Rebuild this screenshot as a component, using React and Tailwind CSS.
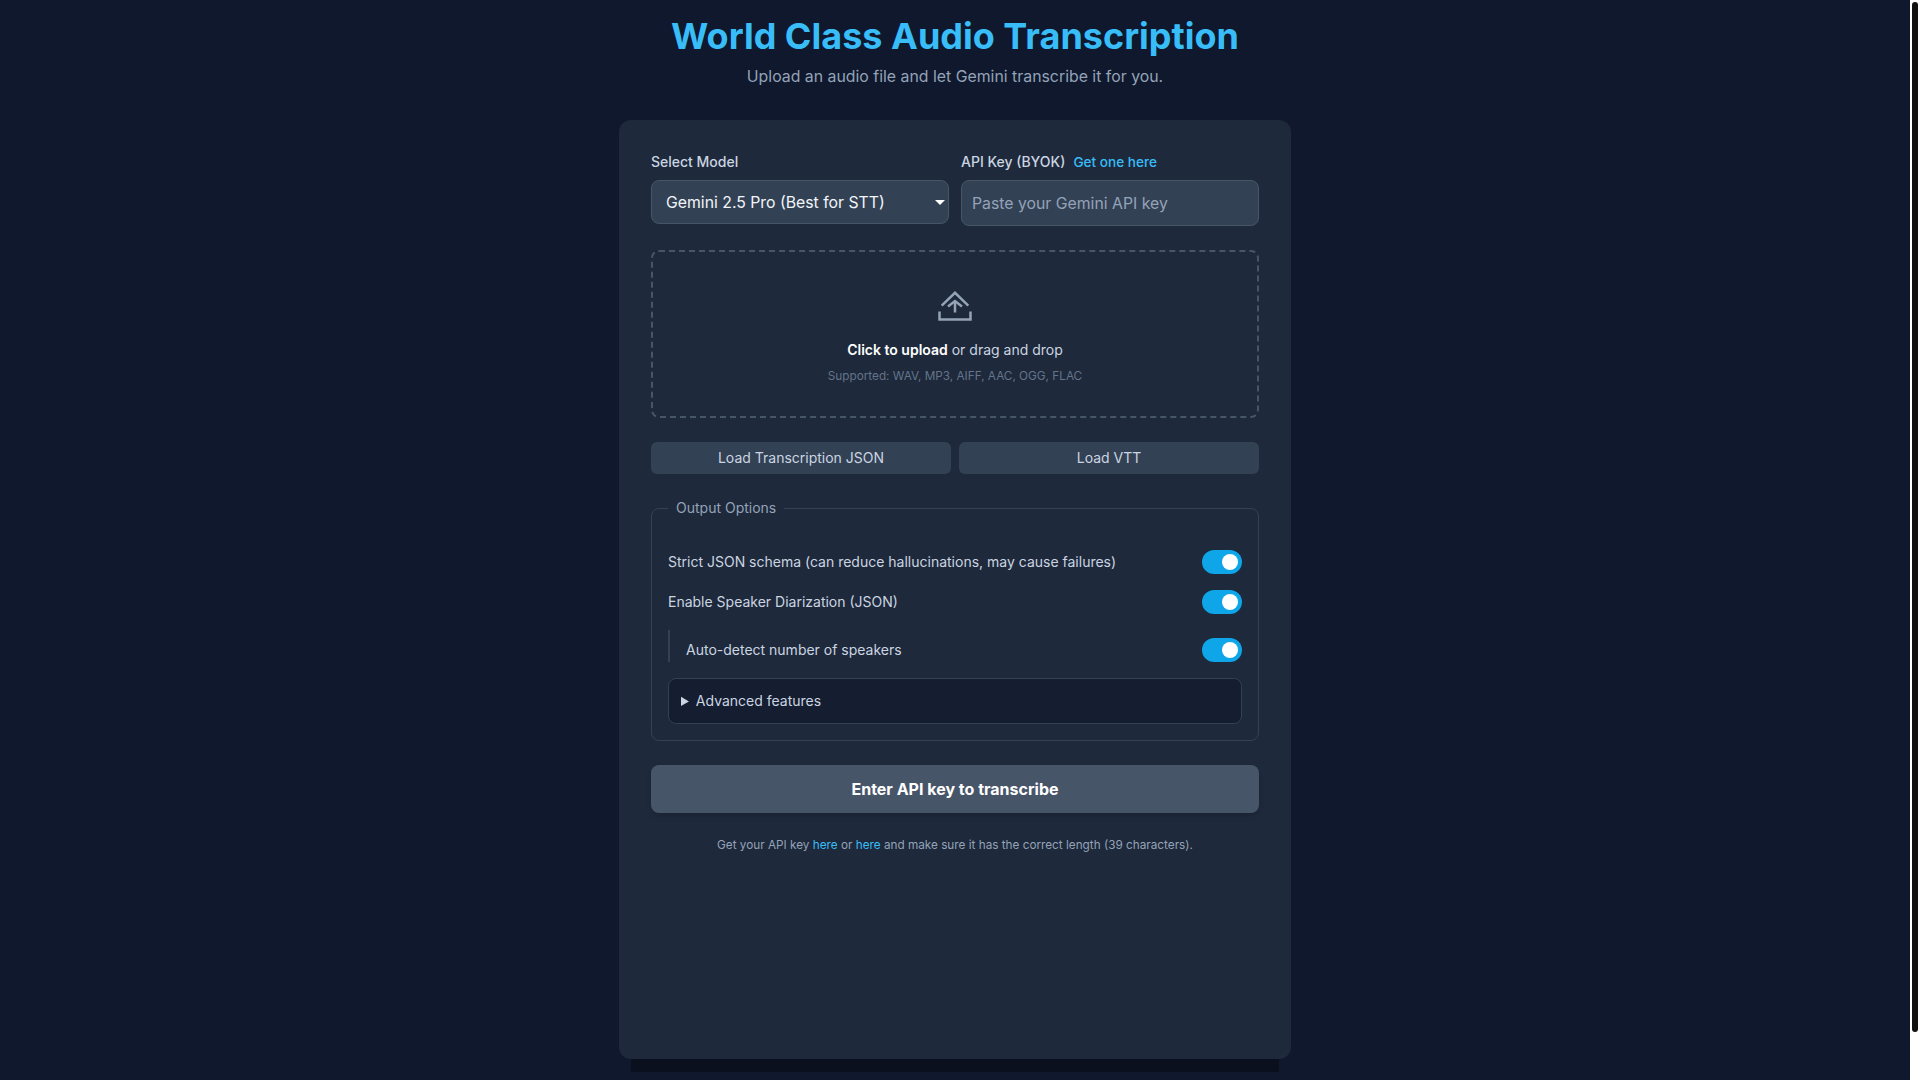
import React from "react";

const font = "font-['Inter',sans-serif]";

const Toggle = () => (
  <div className="relative w-10 h-6 shrink-0 rounded-full bg-[#0ea5e9]">
    <span className="absolute top-1 right-1 w-4 h-4 rounded-full bg-white" />
  </div>
);

const UploadIcon = () => (
  <svg
    viewBox="0 0 40 34"
    className="w-10 h-[34px] text-[#94a3b8]"
    fill="none"
    stroke="currentColor"
    strokeWidth="2.5"
  >
    <path d="M6.700 14.700 20 1.800l13.300 12.900" />
    <path d="M13 15.500 20 10l7 5.500" />
    <path d="M20 10v11.500" />
    <path d="M4.500 20.500v8h31v-8" />
  </svg>
);

export default function App() {
  return (
    <div className={`${font} flex h-screen overflow-hidden bg-[#0f182c] text-[#cbd5e1]`}>
      <main className="flex-1 pt-4 flex flex-col items-center">
        <h1 className="text-4xl font-bold text-[#38bdf8]">World Class Audio Transcription</h1>
        <p className="mt-[9px] text-[15.85px] leading-6 text-[#94a3b8]">Upload an audio file and let Gemini transcribe it for you.</p>

        <div className="mt-[31px] w-[672px] h-[939px] shrink-0 p-8 rounded-xl bg-[#1e293b] shadow-[0_25px_0_-12px_#0a101d]">
          <div className="grid grid-cols-2 gap-3">
            <div>
              <label className="block mb-2 text-sm font-medium">Select Model</label>
              <div className="relative">
                <select className="appearance-none w-full h-11 pl-3.5 pt-[2px] text-[15.8px] text-[#f1f5f9] bg-[#334155] border border-[#475569] rounded-lg">
                  <option>Gemini 2.5 Pro (Best for STT)</option>
                </select>
                <span className="absolute right-1 top-[20px] border-x-[5px] border-t-[5px] border-x-transparent border-t-white" />
              </div>
            </div>
            <div>
              <div className="flex items-baseline gap-2 mb-2 text-sm font-medium">
                <label>API Key (BYOK)</label>
                <a className="text-[13.6px] text-[#38bdf8]">Get one here</a>
              </div>
              <input
                className="w-full px-2.5 pt-[11px] pb-[9px] text-[15.8px] leading-6 text-[#f1f5f9] bg-[#334155] border border-[#475569] rounded-lg placeholder:text-[#94a3b8]"
                placeholder="Paste your Gemini API key"
              />
            </div>
          </div>

          <div className="mt-6 h-[168px] flex flex-col items-center pt-[39px] border-2 border-dashed border-[#475569] rounded-lg">
            <UploadIcon />
            <p className="mt-[15px] text-sm">
              <span className="font-semibold text-white">Click to upload</span> or drag and drop
            </p>
            <p className="mt-2 text-[11.75px] leading-4 text-[#64748b]">Supported: WAV, MP3, AIFF, AAC, OGG, FLAC</p>
          </div>

          <div className="mt-6 grid grid-cols-2 gap-2">
            <button className="h-8 text-sm bg-[#334155] rounded-md">Load Transcription JSON</button>
            <button className="h-8 text-sm bg-[#334155] rounded-md">Load VTT</button>
          </div>

          <fieldset className="mt-6 px-4 pb-4 border border-[#334155] rounded-lg">
            <legend className="px-2 text-sm text-[#94a3b8]">Output Options</legend>
            <div className="flex flex-col gap-4 pt-8">
              <div className="flex items-center justify-between">
                <span className="text-sm">Strict JSON schema (can reduce hallucinations, may cause failures)</span>
                <Toggle />
              </div>
              <div className="flex items-center justify-between">
                <span className="text-sm">Enable Speaker Diarization (JSON)</span>
                <Toggle />
              </div>
              <div className="flex items-center justify-between pt-2 pl-4 border-l-2 border-[#334155]">
                <span className="text-sm">Auto-detect number of speakers</span>
                <Toggle />
              </div>
              <details className="p-3 text-sm bg-[#151d30] border border-[#334155] rounded-lg">
                <summary>Advanced features</summary>
              </details>
            </div>
          </fieldset>

          <button className="mt-6 w-full h-12 text-base font-bold text-white bg-[#475569] rounded-lg shadow-md">
            Enter API key to transcribe
          </button>

          <p className="mt-6 text-center text-[11.75px] leading-4 text-[#94a3b8]">
            Get your API key <a className="text-[#38bdf8]">here</a> or <a className="text-[#38bdf8]">here</a> and make sure it has the correct length (39 characters).
          </p>
        </div>
      </main>

      <aside className="w-[10px] shrink-0 p-[2px] bg-white">
        <div className="h-[1030px] rounded-full bg-[#111]" />
      </aside>
    </div>
  );
}
